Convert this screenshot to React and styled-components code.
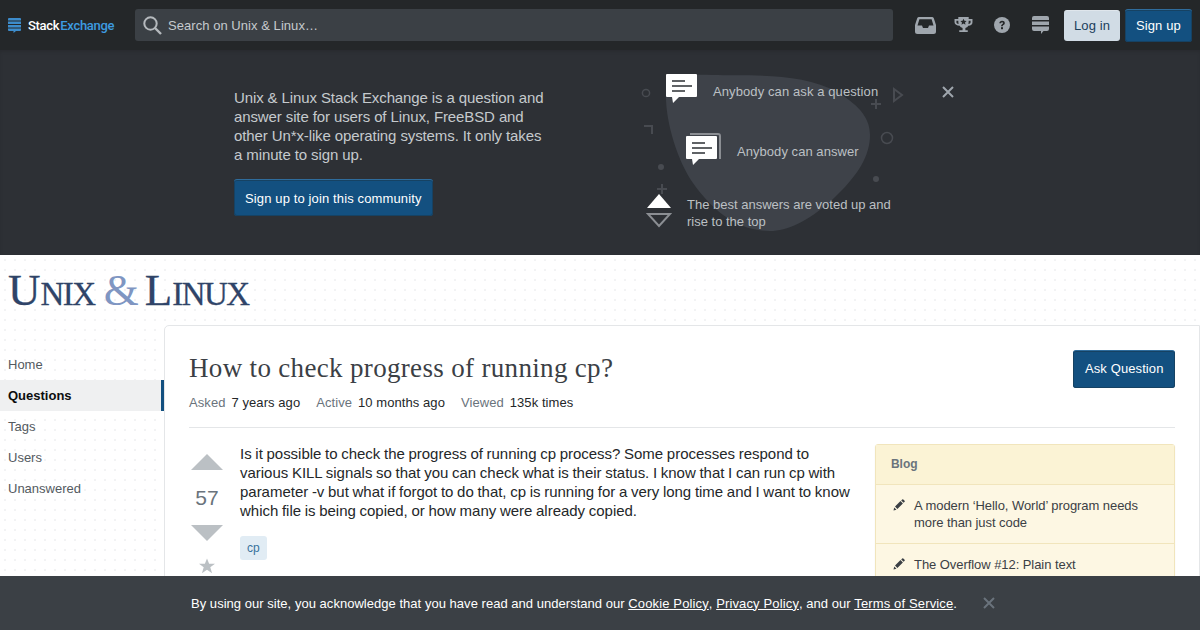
import React from "react";
import styled, { createGlobalStyle } from "styled-components";

const GlobalStyle = createGlobalStyle`
  html, body {
    margin: 0;
    padding: 0;
    height: 630px;
    overflow: hidden;
    font-family: "Liberation Sans", Arial, sans-serif;
    background: #fff;
  }
  * { box-sizing: border-box; }
`;

const Page = styled.div`
  width: 1200px;
  height: 630px;
  overflow: hidden;
  position: relative;
`;

const TopBar = styled.header`
  height: 50px;
  background: #242729;
  display: flex;
  align-items: center;
  padding: 0 8px;
`;

const Brand = styled.div`
  width: 127px;
  flex: none;
  display: flex;
  align-items: center;
  gap: 7px;
  font-family: Roboto, sans-serif;
  font-size: 13px;
  font-weight: 500;
  letter-spacing: -0.3px;
  color: #fff;
  span { color: #3d9be0; margin-left: 1px; }
`;

const Search = styled.div`
  width: 758px;
  flex: none;
  height: 32px;
  background: #3b4045;
  border-radius: 3px;
  display: flex;
  align-items: center;
  gap: 6px;
  padding: 0 8px;
  font-size: 13px;
  letter-spacing: 0.05px;
  color: #c5cacd;
`;

const TopIcons = styled.div`
  display: flex;
  flex: none;
  gap: 16.5px;
  margin-left: 21px;
  margin-right: 12.5px;
`;

const TopIcon = styled.div`
  width: 22px;
  height: 22px;
  display: flex;
  align-items: center;
  justify-content: center;
`;

const Button = styled.div`
  display: inline-flex;
  flex: none;
  align-items: center;
  justify-content: center;
  border-radius: 3px;
  font-size: 13px;
  letter-spacing: ${(p) => p.$ls || 0.1}px;
  height: ${(p) => p.$h || 32}px;
  padding: 0 ${(p) => p.$px || 11}px ${(p) => p.$pb || 0}px;
  background: ${(p) => (p.$light ? "#d1dce5" : "#135080")};
  color: ${(p) => (p.$light ? "#1b405c" : "#fff")};
  border-top: 1px solid ${(p) => (p.$light ? "#dfe6ec" : "#2f6c9c")};
  box-shadow: ${(p) => (p.$light ? "none" : "0 0 0 1px #164263 inset")};
  margin-left: ${(p) => p.$ml || 0}px;
`;

const Hero = styled.section`
  height: 205px;
  background: #2d3035;
  box-shadow: inset 0 2px 3px rgba(0, 0, 0, 0.1);
  display: flex;
  padding-left: 234px;
  position: relative;
`;

const HeroText = styled.div`
  width: 316px;
  padding-top: 38px;
  p {
    margin: 0 0 15px;
    font-size: 15px;
    line-height: 19px;
    letter-spacing: -0.11px;
    color: #c5cacd;
  }
`;

const HeroArt = styled.div`
  position: relative;
  width: 330px;
  margin-left: 89px;
`;

const Blob = styled.svg`
  position: absolute;
  left: -2px;
  top: 0;
`;

const Point = styled.div`
  position: absolute;
  left: ${(p) => p.$x}px;
  top: ${(p) => p.$y}px;
  width: ${(p) => p.$w || 220}px;
  font-size: 13px;
  line-height: 17px;
  letter-spacing: ${(p) => p.$ls || 0}px;
  color: #bcc0c4;
  svg { display: block; }
`;

const Closer = styled.svg`
  position: absolute;
  left: ${(p) => p.$x}px;
  top: ${(p) => p.$y}px;
`;

const Body = styled.div`
  background-color: #fff;
  background-image: radial-gradient(#f2f3f4 1px, transparent 1.2px);
  background-size: 10px 10px;
  height: 375px;
`;

const SiteLogo = styled.div`
  height: 70px;
  padding: 10px 0 0 8px;
  display: flex;
  align-items: baseline;
  gap: 9px;
  font-family: "Liberation Serif", serif;
  font-size: 45px;
  line-height: 50px;
  color: #2f4468;
`;

const LogoWord = styled.span`
  -webkit-text-stroke: 0.3px #2f4468;
  small {
    font-size: 33px;
    letter-spacing: -1.5px;
  }
`;

const LogoAmp = styled.span`
  color: #7f96c2;
  margin-right: -3px;
`;

const Columns = styled.div`
  display: flex;
  align-items: flex-start;
`;

const Sidebar = styled.nav`
  width: 164px;
  padding-top: 24px;
  flex: none;
`;

const NavItem = styled.div`
  height: 31px;
  line-height: 31px;
  padding-left: 8px;
  font-size: 13px;
  color: ${(p) => (p.$active ? "#0c0d0e" : "#535a60")};
  font-weight: ${(p) => (p.$active ? 700 : 400)};
  background: ${(p) => (p.$active ? "#eff0f1" : "transparent")};
  border-right: ${(p) => (p.$active ? "3px solid #135080" : "none")};
`;

const Main = styled.main`
  flex: 1;
  height: 320px;
  background: #fff;
  border: 1px solid #e4e6e8;
  border-top-left-radius: 5px;
  padding: 24px 24px 0;
`;

const QuestionHeader = styled.div`
  display: flex;
  justify-content: space-between;
  align-items: flex-start;
  height: 78px;
  border-bottom: 1px solid #e4e6e8;
`;

const Title = styled.h1`
  margin: 0 0 9px;
  padding-top: 1px;
  font-family: "Liberation Serif", serif;
  font-weight: 400;
  font-size: 27px;
  line-height: 35px;
  letter-spacing: 0.33px;
  color: #3b4045;
`;

const Meta = styled.div`
  display: flex;
  gap: 16px;
  font-size: 13px;
  letter-spacing: 0.07px;
  color: #6a737c;
  b { font-weight: 400; color: #242729; margin-left: 6px; }
`;

const Content = styled.div`
  display: flex;
  margin-top: 16px;
`;

const VoteColumn = styled.div`
  width: 36px;
  margin-right: 15px;
  display: flex;
  flex-direction: column;
  align-items: center;
  padding-top: 10px;
  color: #6a737c;
  svg { display: block; }
`;

const Score = styled.div`
  margin: 16px 0 16px;
  font-size: 21px;
  line-height: 23px;
`;

const FavStar = styled.svg`
  margin-top: 17px;
`;

const Post = styled.div`
  width: 618px;
  margin-right: 17px;
  font-size: 15px;
  line-height: 19px;
  letter-spacing: -0.02px;
  word-spacing: -0.45px;
  color: #242729;
  p { margin: 0 0 16px; }
`;

const Tag = styled.span`
  display: inline-block;
  height: 24px;
  line-height: 24px;
  padding: 0 7px;
  font-size: 12px;
  color: #39739d;
  background: #e1ecf4;
  border-radius: 3px;
`;

const BlogCard = styled.aside`
  width: 300px;
  height: 200px;
  background: #fdf7e3;
  border: 1px solid #f1e5bc;
  border-radius: 3px;
  box-shadow: 0 1px 2px rgba(0, 0, 0, 0.05);
  font-size: 13px;
  letter-spacing: -0.06px;
  color: #3b4045;
`;

const BlogTitle = styled.div`
  height: 40px;
  line-height: 38px;
  padding-left: 15px;
  font-size: 12px;
  font-weight: 700;
  color: #6a737c;
  background: #fbf3d5;
  border-bottom: 1px solid #f1e5bc;
`;

const BlogItem = styled.div`
  display: flex;
  gap: 9px;
  padding: 12px 15px 12px 17px;
  line-height: 17px;
  border-bottom: 1px solid #f1e5bc;
  svg { flex: none; margin-top: 2px; }
`;

const CookieBar = styled.div`
  position: absolute;
  left: 0;
  right: 0;
  bottom: 0;
  height: 54px;
  background: #3b4045;
  display: flex;
  align-items: center;
  padding-left: 191px;
  font-size: 13px;
  letter-spacing: 0.03px;
  color: #fff;
  u { text-underline-offset: 1px; letter-spacing: 0.14px; }
`;

const Cross = ({ x, y, color }) => (
  <Closer $x={x} $y={y} width="14" height="14" viewBox="0 0 14 14">
    <path d="M2 2l10 10M12 2L2 12" stroke={color} strokeWidth="2" fill="none" />
  </Closer>
);

const Bubble = ({ stacked }) => (
  <svg width="36" height="34" viewBox="0 -4 36 34">
    {stacked && <path d="M4-2h28a2 2 0 0 1 2 2v23" fill="none" stroke="#8b8e93" strokeWidth="2" />}
    <path d="M1 0h29a1 1 0 0 1 1 1v21a1 1 0 0 1-1 1H13l-6 6-1-6H1a1 1 0 0 1-1-1V1a1 1 0 0 1 1-1z" fill="#fff" />
    <path d="M6 7h13M6 12h20M6 17h13" stroke="#2d3035" strokeWidth="1.600" fill="none" />
  </svg>
);

const Pencil = () => (
  <svg width="12" height="12" viewBox="0 0 12 12">
    <path d="M0.5 11.5l0.7-3 2.3 2.3zM2 7.600l5.500-5.500 2.400 2.400L4.400 10zM8.200 1.400l1-1a.8.8 0 0 1 1.100 0l1.300 1.300a.8.8 0 0 1 0 1.100l-1 1z" fill="#3b4045" />
  </svg>
);

export default function App() {
  return (
    <Page>
      <GlobalStyle />
      <TopBar>
        <Brand>
          <svg width="13" height="15" viewBox="0 0 13 15">
            <path d="M0 1a1 1 0 0 1 1-1h11a1 1 0 0 1 1 1v1.400H0zM0 3.400h13v2.600H0zM0 7h13v2.600H0zM0 10.600h13V12a1 1 0 0 1-1 1H8l-2.500 2V13H1a1 1 0 0 1-1-1z" fill="#3d8ccb" />
          </svg>
          <div>Stack<span>Exchange</span></div>
        </Brand>
        <Search>
          <svg width="19" height="19" viewBox="0 0 19 19">
            <circle cx="7.500" cy="7.500" r="6.200" fill="none" stroke="#b5b9bd" strokeWidth="2" />
            <path d="M12 12l6 6" stroke="#b5b9bd" strokeWidth="2.400" />
          </svg>
          <span>Search on Unix &amp; Linux…</span>
        </Search>
        <TopIcons>
          <TopIcon>
            <svg width="21" height="17" viewBox="0 0 21 17">
              <path d="M4 0h13a2 2 0 0 1 1.800 1.200L21 8v6.500a2.500 2.500 0 0 1-2.500 2.500h-16A2.500 2.500 0 0 1 0 14.500V8L2.200 1.200A2 2 0 0 1 4 0zm.4 2.200L2.500 8.500H7l1 2.500h5l1-2.500h4.500l-1.900-6.300z" fill="#9fa6ad" />
            </svg>
          </TopIcon>
          <TopIcon>
            <svg width="19" height="17" viewBox="0 0 19 18">
              <path d="M4 0h11v2h4v3.500c0 2.400-1.600 3.500-4.400 3.800-.7 1.200-1.700 2-3.100 2.300V14H14v2H5v-2h3.500v-2.400C7.100 11.300 6.100 10.500 5.400 9.300 2.600 9 0 7.900 0 5.500V2h4zM2 4v1.500C2 6.700 3 7.200 4.300 7.300 4.100 6.400 4 5.300 4 4zm13 0c0 1.300-.1 2.400-.3 3.300 1.300-.1 2.300-.6 2.300-1.800V4z" fill="#9fa6ad" />
              <path d="M9.500 1.800l1 2.200 2.300.2-1.700 1.600.5 2.300-2.100-1.200-2.100 1.200.5-2.300-1.700-1.600 2.300-.2z" fill="#242729" />
            </svg>
          </TopIcon>
          <TopIcon>
            <svg width="16" height="16" viewBox="0 0 16 16">
              <circle cx="8" cy="8" r="8" fill="#9fa6ad" />
              <path d="M5.300 6.200C5.400 4.600 6.500 3.700 8.100 3.700c1.600 0 2.700.9 2.700 2.200 0 1-.5 1.500-1.300 2.100-.6.400-.7.700-.7 1.300H7.100c0-1.100.3-1.600 1-2.100.6-.4.900-.7.900-1.200 0-.5-.4-.8-.9-.8-.6 0-1 .4-1.100 1z" fill="#242729" />
              <rect x="7" y="10.200" width="2" height="2" fill="#242729" />
            </svg>
          </TopIcon>
          <TopIcon>
            <svg width="17" height="18" viewBox="0 0 17 18">
              <path d="M0 2a2 2 0 0 1 2-2h13a2 2 0 0 1 2 2v2H0zM0 5.500h17V9H0zM0 10.500h17V13a2 2 0 0 1-2 2h-3.500L9 18v-3H2a2 2 0 0 1-2-2z" fill="#9fa6ad" />
            </svg>
          </TopIcon>
        </TopIcons>
        <Button $light $h={31} $px={10}>Log in</Button>
        <Button $ml={5} $h={33}>Sign up</Button>
      </TopBar>

      <Hero>
        <HeroText>
          <p>
            Unix &amp; Linux Stack Exchange is a question and answer site for users of Linux, FreeBSD and
            other Un*x-like operating systems. It only takes a minute to sign up.
          </p>
          <Button $h={37} $px={11} $ls={0.13}>Sign up to join this community</Button>
        </HeroText>
        <HeroArt>
          <Blob width="320" height="205" viewBox="0 0 320 205">
            <path d="M29 43C30 25 50 24 75 25C110 26 165 22 200 42C225 57 233 70 233 85C233 105 222 125 195 150C170 172 150 181 133 181C100 181 75 160 56 133C40 110 28 70 29 43z" fill="#3e4249" />
            <g fill="#484b51">
              <circle cx="24" cy="117" r="3" />
              <circle cx="239" cy="129" r="3" />
              <path d="M238 49h2v4h4v2h-4v4h-2v-4h-4v-2h4z" />
              <path d="M24 134h2v4h4v2h-4v4h-2v-4h-4v-2h4z" />
              <path d="M7 76h8v8" fill="none" stroke="#484b51" strokeWidth="2" />
              <path d="M257 39l8 6-8 6z" fill="none" stroke="#484b51" strokeWidth="2" />
              <circle cx="9" cy="43" r="3.600" fill="none" stroke="#484b51" strokeWidth="1.500" />
              <circle cx="250" cy="88" r="5.500" fill="none" stroke="#484b51" strokeWidth="1.500" />
            </g>
          </Blob>
          <Point $x={27} $y={20} $w={40}><Bubble /></Point>
          <Point $x={74} $y={33} $ls={0.1}>Anybody can ask a question</Point>
          <Point $x={47} $y={82} $w={40}><Bubble stacked /></Point>
          <Point $x={98} $y={93} $ls={0.05}>Anybody can answer</Point>
          <Point $x={7} $y={143} $w={26}>
            <svg width="26" height="35" viewBox="0 0 26 35">
              <path d="M13 1l12 14H1z" fill="#fff" />
              <path d="M2 21h22L13 33z" fill="none" stroke="#8b8e93" strokeWidth="2" />
            </svg>
          </Point>
          <Point $x={48} $y={146}>The best answers are voted up and rise to the top</Point>
          <Cross x={302} y={35} color="#9fa6ad" />
        </HeroArt>
      </Hero>

      <Body>
        <SiteLogo>
          <LogoWord>U<small>NIX</small></LogoWord>
          <LogoAmp>&amp;</LogoAmp>
          <LogoWord>L<small>INUX</small></LogoWord>
        </SiteLogo>
        <Columns>
          <Sidebar>
            <NavItem>Home</NavItem>
            <NavItem $active>Questions</NavItem>
            <NavItem>Tags</NavItem>
            <NavItem>Users</NavItem>
            <NavItem>Unanswered</NavItem>
          </Sidebar>
          <Main>
            <QuestionHeader>
              <div>
                <Title>How to check progress of running cp?</Title>
                <Meta>
                  <div>Asked<b>7 years ago</b></div>
                  <div>Active<b>10 months ago</b></div>
                  <div>Viewed<b>135k times</b></div>
                </Meta>
              </div>
              <Button $h={38} $px={11.5} $pb={2}>Ask Question</Button>
            </QuestionHeader>
            <Content>
              <VoteColumn>
                <svg width="32" height="16" viewBox="0 0 32 16"><path d="M16 0l16 16H0z" fill="#bbc0c4" /></svg>
                <Score>57</Score>
                <svg width="32" height="16" viewBox="0 0 32 16"><path d="M0 0h32L16 16z" fill="#bbc0c4" /></svg>
                <FavStar width="16" height="16" viewBox="0 0 18 17">
                  <path d="M9 0l2.400 6H18l-5.300 4 2 6.700L9 12.800l-5.700 3.900 2-6.700L0 6h6.600z" fill="#bbc0c4" />
                </FavStar>
              </VoteColumn>
              <Post>
                <p>
                  Is it possible to check the progress of running cp process? Some processes respond to various
                  KILL signals so that you can check what is their status. I know that I can run cp with
                  parameter -v but what if forgot to do that, cp is running for a very long time and I want to
                  know which file is being copied, or how many were already copied.
                </p>
                <Tag>cp</Tag>
              </Post>
              <BlogCard>
                <BlogTitle>Blog</BlogTitle>
                <BlogItem><Pencil /><div>A modern ‘Hello, World’ program needs more than just code</div></BlogItem>
                <BlogItem><Pencil /><div>The Overflow #12: Plain text</div></BlogItem>
              </BlogCard>
            </Content>
          </Main>
        </Columns>
      </Body>

      <CookieBar>
        <span>
          By using our site, you acknowledge that you have read and understand our <u>Cookie Policy</u>,{" "}
          <u>Privacy Policy</u>, and our <u>Terms of Service</u>.
        </span>
        <Cross x={982} y={20} color="#6a737c" />
      </CookieBar>
    </Page>
  );
}
